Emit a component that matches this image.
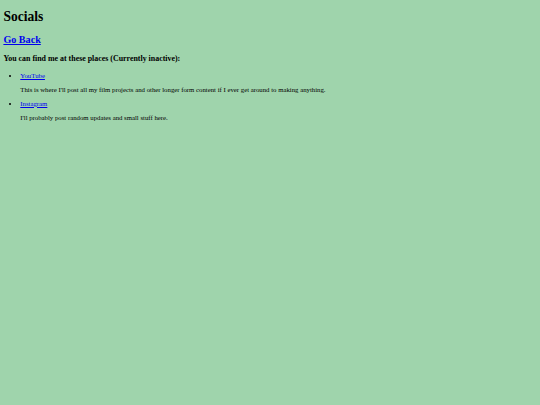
import React from 'react';

// Page is a plain default-styled document shown at ~0.423 scale.
export default function App() {
  return (
    <div className="min-h-screen flow-root bg-[#9fd4ac] px-[3.4px] text-black leading-[normal] font-['Liberation_Serif','Times_New_Roman',serif]">
      <h1 className="my-[9.07px] text-[13.54px] font-bold">Socials</h1>
      <h2 className="my-[8.43px] text-[10.15px] font-bold">
        <a href="#" className="text-[#0000ee] underline">
          Go Back
        </a>
      </h2>
      <h3 className="mt-[8.3px] mb-[7.92px] text-[7.92px] font-bold">You can find me at these places (Currently inactive):</h3>
      <ul className="mt-[9px] mb-[6.77px] list-disc pl-[16.9px] text-[6.77px]">
        <li>
          <a href="#" className="text-[#0000ee] underline">
            YouTube
          </a>
          <p className="my-[7.2px]">
            This is where I'll post all my film projects and other longer form content if I ever get around to making anything.
          </p>
        </li>
        <li>
          <a href="#" className="text-[#0000ee] underline">
            Instagram
          </a>
          <p className="my-[7.2px]">I'll probably post random updates and small stuff here.</p>
        </li>
      </ul>
    </div>
  );
}
